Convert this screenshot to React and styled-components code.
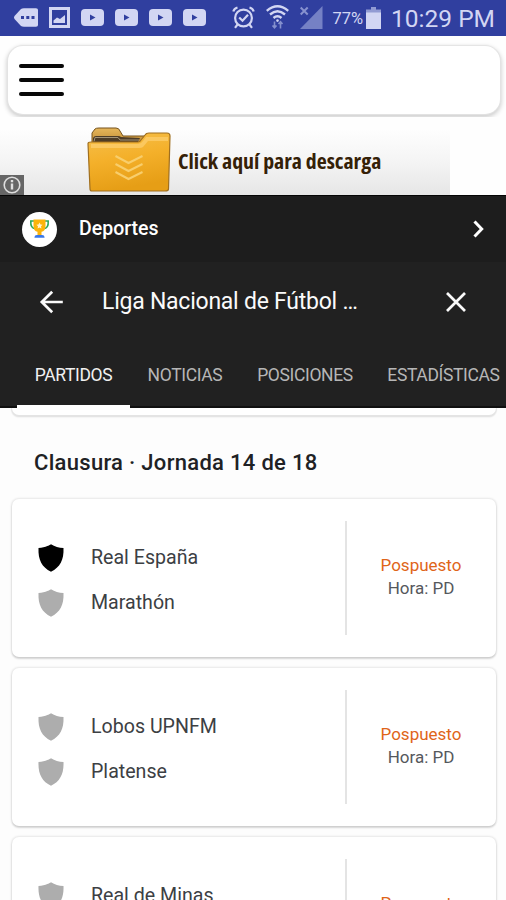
import React from "react";
import styled, { createGlobalStyle } from "styled-components";

const GlobalStyle = createGlobalStyle`
  * { box-sizing: border-box; }
  html, body { margin: 0; background: #fff; }
  body { font-family: Roboto, sans-serif; overflow: hidden; }
  svg { display: block; flex: none; overflow: visible; }
`;

const Screen = styled.div`
  width: 506px;
  height: 900px;
  overflow: hidden;
  background: #fdfdfd;
`;

const StatusBar = styled.header`
  height: 36px;
  padding: 0 11px 1px 14px;
  display: flex;
  align-items: center;
  justify-content: space-between;
  background: #303f9f;
  color: #d2d6f3;
`;

const StatusGroup = styled.div`
  display: flex;
  align-items: center;
  gap: ${(p) => p.$gap}px;
`;

const Label = styled.span`
  display: block;
  white-space: nowrap;
  font-size: ${(p) => p.$size}px;
  line-height: ${(p) => p.$line || 28}px;
  font-weight: ${(p) => p.$weight || 400};
  letter-spacing: ${(p) => p.$spacing || 0}px;
  color: ${(p) => p.$color || "inherit"};
`;

const StatusText = styled(Label)`
  padding-top: 3px;
  margin-left: ${(p) => p.$before || 0}px;
`;

const TopArea = styled.section`
  height: 81px;
  padding: 10px 6px 0 8px;
  background: #fefefe;
`;

const SearchCard = styled.div`
  height: 68px;
  border-radius: 15px;
  padding: 18px 11px;
  background: #fff;
  box-shadow: 0 0 1px 1px #e4e4e4, 0 2px 5px 1px rgba(0, 0, 0, 0.22);
`;

const Burger = styled.button`
  display: flex;
  flex-direction: column;
  justify-content: space-between;
  width: 45px;
  height: 32px;
  padding: 0;
  border: 0;
  background: none;
`;

const BurgerLine = styled.span`
  height: 4px;
  border-radius: 2px;
  background: #080808;
`;

const AdStrip = styled.section`
  height: 78px;
  display: flex;
  background: #fefefe;
`;

const AdBanner = styled.div`
  width: 450px;
  height: 78px;
  display: flex;
  align-items: flex-end;
  background: linear-gradient(#fefefe 15%, #f5f5f5 55%, #e6e6e6);
`;

const InfoBadge = styled.div`
  width: 24px;
  height: 20px;
  padding-left: 3px;
  background: #666;
  display: flex;
  align-items: center;
`;

const FolderSlot = styled.div`
  margin: 0 0 2px 63px;
`;

const AdText = styled.span`
  align-self: center;
  margin: 10px 0 0 6px;
  font: 700 21.8px/30px "Open Sans", sans-serif;
  font-stretch: 75%;
  color: #352107;
  white-space: nowrap;
`;

const SportsBar = styled.div`
  height: 67px;
  padding: 0 20px 0 22px;
  display: flex;
  align-items: center;
  background: #1d1d1d;
  border-top: 1px solid #050505;
  color: #fff;
`;

const TrophyDisc = styled.div`
  width: 35px;
  height: 35px;
  margin-right: 22px;
  border-radius: 50%;
  display: grid;
  place-items: center;
  background: #fff;
`;

const Grow = styled.div`
  flex: 1;
  min-width: 0;
`;

const LeagueHeader = styled.header`
  height: 146px;
  background: #212121;
  color: #fafafa;
`;

const TitleRow = styled.div`
  height: 79px;
  padding: 0 39px;
  display: flex;
  align-items: center;
`;

const TitleSlot = styled(Grow)`
  padding-left: 38px;
`;

const Tabs = styled.nav`
  height: 67px;
  padding-left: 17px;
  display: flex;
  box-shadow: inset 0 -2px #101010;
`;

const Tab = styled.a`
  flex: none;
  width: ${(p) => p.$width}px;
  padding-top: 20px;
  display: flex;
  justify-content: center;
  border-bottom: 3px solid ${(p) => (p.$active ? "#fff" : "transparent")};
  color: ${(p) => (p.$active ? "#f0f0f0" : "#b6b6b6")};
`;

const Feed = styled.main`
  padding: 0 10px 0 12px;
`;

const PreviousCard = styled.div`
  height: 7px;
  background: #fff;
  border-radius: 0 0 8px 8px;
  box-shadow: 0 1px 1px 1px #e4e4e4, 0 2px 2px rgba(0, 0, 0, 0.1);
  clip-path: inset(0 -4px -5px);
`;

const RoundTitle = styled.h2`
  height: 84px;
  margin: 0;
  padding: 34px 0 0 22px;
  color: #202124;
`;

const MatchCard = styled.article`
  height: 158px;
  margin-bottom: 11px;
  display: flex;
  align-items: center;
  background: #fff;
  border-radius: 7px;
  box-shadow: 0 0 2px 1px rgba(0, 0, 0, 0.09), 0 2px 2px rgba(0, 0, 0, 0.13);
`;

const Teams = styled.div`
  width: 333px;
  padding: 4px 0 0 26px;
  display: flex;
  flex-direction: column;
  gap: 17px;
`;

const TeamRow = styled.div`
  height: 28px;
  display: flex;
  align-items: center;
  gap: 26px;
  color: #3c4043;
`;

const MatchInfo = styled.div`
  flex: 1;
  height: 114px;
  padding: 0 1px 3px 0;
  border-left: 2px solid #e4e4e4;
  display: flex;
  flex-direction: column;
  align-items: center;
  justify-content: center;
`;

const YoutubeIcon = () => (
  <svg width="23" height="17" viewBox="0 0 23 17">
    <rect width="23" height="17" rx="4" fill="#d2d6f3" />
    <path d="M9 5.6 14.5 8.5 9 11.4Z" fill="#303f9f" />
  </svg>
);

const MessageIcon = () => (
  <svg width="24" height="19" viewBox="0 0 24 19">
    <path d="M7 1Q8 .2 10 .2H22Q24 .2 24 2V17Q24 18.8 22 18.8H10Q8 18.8 7 18L.5 11Q-.6 9.5.5 8Z" fill="#d2d6f3" />
    <path d="M7 8h3v3H7zm5.3 0h3v3h-3zm5.2 0h3v3h-3z" fill="#303f9f" />
  </svg>
);

const PictureIcon = () => (
  <svg width="21" height="21" viewBox="0 0 21 21">
    <path fill="#d2d6f3" fillRule="evenodd" d="M0 0H21V21H0ZM3 3V18H18V3Z" />
    <path fill="#d2d6f3" d="M4.5 16v-2.500l3.500-3 3 1.500 5-4v8Z" />
  </svg>
);

const AlarmIcon = () => (
  <svg width="23" height="24" viewBox="0 0 23 24" fill="none" stroke="#d2d6f3" strokeWidth="2.2">
    <circle cx="11.5" cy="12" r="8.4" />
    <path d="M1.300 5.500Q2 2.500 5.500 1.500M17.500 1.500Q21 2.500 21.700 5.500M7.200 11.500l3.300 3.200 5.500-6M5.500 18.500 3 21.800M17.500 18.500l2.500 3.300" />
  </svg>
);

const WifiIcon = () => (
  <svg width="23" height="24" viewBox="0 0 23 24" fill="none" stroke="#d2d6f3" strokeWidth="2.4">
    <path d="M.8 4.800Q11.500-4.200 22.200 4.800M4 8.500q7.500-6.500 15 0M7.500 12q4-3.600 8 0" />
    <circle cx="11.5" cy="14.600" r="1.300" fill="#d2d6f3" stroke="none" />
    <path d="M8.500 15.500v6.500M6.500 19.500l2 2.200 2-2.200M14.500 22.500v-6.500M12.500 18l2-2.200 2 2.200" stroke="#8490cd" strokeWidth="1.6" />
  </svg>
);

const SignalIcon = () => (
  <svg width="23" height="23" viewBox="0 0 23 23">
    <path d="M22.5 0V23H0Z" fill="#7581c5" />
    <path d="m.7 1.5 7 7m0-7-7 7" stroke="#8792cf" strokeWidth="2" />
  </svg>
);

const BatteryIcon = () => (
  <svg width="15" height="22" viewBox="0 0 15 22">
    <path d="M5 0h5v2.5h5V6H0V2.5h5Z" fill="#929bd3" />
    <path d="M0 5.5H15V22H0Z" fill="#d2d6f3" />
  </svg>
);

const InfoIcon = () => (
  <svg width="18" height="18" viewBox="0 0 18 18" fill="none" stroke="#dedede">
    <circle cx="9" cy="9" r="7.8" strokeWidth="1.6" />
    <path d="M9 4v2.200M9 7.4v6" strokeWidth="2.4" />
  </svg>
);

const FolderIcon = () => (
  <svg width="85" height="66" viewBox="0 0 85 66">
    <defs>
      <linearGradient id="folderFront" x1="0" y1="0" x2=".25" y2="1">
        <stop offset="0" stopColor="#f6c04c" />
        <stop offset=".5" stopColor="#f4b02a" />
        <stop offset="1" stopColor="#e69e16" />
      </linearGradient>
      <linearGradient id="folderBack" x1="0" y1="0" x2="0" y2="1">
        <stop offset="0" stopColor="#e6b65b" />
        <stop offset="1" stopColor="#ac761d" />
      </linearGradient>
    </defs>
    <path d="M5 14V6L8 2Q9 1 12 1H29Q32 1 33 4L36 9H77V25H5Z" fill="url(#folderBack)" stroke="#76531d" />
    <path d="M6 16V11Q7 9 9 9H31Q33 9 34 10L53 11 50 17Z" fill="#4e3c26" />
    <path d="M7 14.5 8 10.5H31L33 13H52" fill="none" stroke="#a39376" />
    <path d="M1 16.5Q1 15 4 15H51Q53 15 54 13L58 8Q59 6 62 6H80Q83 6 83 9L81.500 62Q81.500 64 78 64H5Q3 64 3 62Z" fill="url(#folderFront)" stroke="#a06f1f" strokeWidth="1.2" />
    <path d="M4 17H51Q54 17 56 14L59 10H81V14H61L56 20Q55 21 52 21H4Z" fill="#ffd782" opacity=".55" />
    <path d="m28.5 29 13 7 14-7m-27 8 13 7 14-7m-27 8 13 7 14-7" fill="none" stroke="#f8ce6c" strokeWidth="2" />
  </svg>
);

const TrophyIcon = () => (
  <svg width="21" height="20" viewBox="0 0 21 20">
    <path d="M5 2H1.8Q1.3 9.5 6.5 9.8M16 2h3.2Q19.7 9.5 14.5 9.8" fill="none" stroke="#2ba65a" strokeWidth="1.6" />
    <path d="M4.5.5H16.5V7Q16.5 12 12.5 12.8V16H8.5V12.8Q4.5 12 4.5 7Z" fill="#fbb40a" />
    <path d="m10.5 3.500 1 2 2.100.300-1.600 1.500.400 2.100-1.900-1-1.900 1 .400-2.100-1.600-1.500 2.100-.300Z" fill="#fff2cc" />
    <path d="M5.5 18.8V18Q5.5 16 8 16h5q2.5 0 2.5 2v.8Z" fill="#3977e8" />
  </svg>
);

const ChevronIcon = () => (
  <svg width="14" height="20" viewBox="0 0 14 20">
    <path d="m2.500 2.500 7.200 7.500-7.200 7.500" fill="none" stroke="#fff" strokeWidth="3" />
  </svg>
);

const BackIcon = () => (
  <svg width="25" height="24" viewBox="0 0 25 24" fill="none" stroke="#fafafa" strokeWidth="2.7">
    <path d="M23.8 12H3M13.2 1.7 2.8 12l10.4 10.3" />
  </svg>
);

const CloseIcon = () => (
  <svg width="22" height="22" viewBox="0 0 22 22">
    <path d="m2 2 18 18M20 2 2 20" stroke="#fafafa" strokeWidth="2.7" />
  </svg>
);

const Shield = ({ color }) => (
  <svg width="27" height="28" viewBox="0 0 27 28">
    <path d="M13 .3Q18.500 4 25.500 4C26 16 22 23.200 13 27.800 4 23.200 0 16 .5 4 7.500 4 13 .3 13 .3Z" fill={color} />
  </svg>
);

const tabs = [
  { name: "PARTIDOS", width: 113, active: true },
  { name: "NOTICIAS", width: 110 },
  { name: "POSICIONES", width: 130 },
  { name: "ESTADÍSTICAS", width: 147 },
];

const matches = [
  [{ name: "Real España", color: "#000" }, { name: "Marathón", color: "#adadad" }],
  [{ name: "Lobos UPNFM", color: "#adadad" }, { name: "Platense", color: "#adadad" }],
  [{ name: "Real de Minas", color: "#adadad" }, { name: "", color: "#adadad" }],
];

export default function App() {
  return (
    <Screen>
      <GlobalStyle />
      <StatusBar>
        <StatusGroup $gap={11}>
          <MessageIcon />
          <PictureIcon />
          <YoutubeIcon />
          <YoutubeIcon />
          <YoutubeIcon />
          <YoutubeIcon />
        </StatusGroup>
        <StatusGroup $gap={9}>
          <StatusGroup $gap={11}>
            <AlarmIcon />
            <WifiIcon />
            <SignalIcon />
          </StatusGroup>
          <StatusGroup $gap={3}>
            <StatusText $size={16.5}>77%</StatusText>
            <BatteryIcon />
            <StatusText $size={24.5} $before={7}>10:29 PM</StatusText>
          </StatusGroup>
        </StatusGroup>
      </StatusBar>

      <TopArea>
        <SearchCard>
          <Burger aria-label="Menú">
            <BurgerLine />
            <BurgerLine />
            <BurgerLine />
          </Burger>
        </SearchCard>
      </TopArea>

      <AdStrip>
        <AdBanner>
          <InfoBadge><InfoIcon /></InfoBadge>
          <FolderSlot><FolderIcon /></FolderSlot>
          <AdText>Click aquí para descarga</AdText>
        </AdBanner>
      </AdStrip>

      <SportsBar>
        <TrophyDisc><TrophyIcon /></TrophyDisc>
        <Grow><Label $size={19.5} $weight={500}>Deportes</Label></Grow>
        <ChevronIcon />
      </SportsBar>

      <LeagueHeader>
        <TitleRow>
          <BackIcon />
          <TitleSlot><Label $size={23} $spacing={-0.24}>Liga Nacional de Fútbol …</Label></TitleSlot>
          <CloseIcon />
        </TitleRow>
        <Tabs>
          {tabs.map((tab) => (
            <Tab key={tab.name} $width={tab.width} $active={tab.active}>
              <Label $size={17.5} $spacing={-0.35}>{tab.name}</Label>
            </Tab>
          ))}
        </Tabs>
      </LeagueHeader>

      <Feed>
        <PreviousCard />
        <RoundTitle><Label $size={22} $weight={500} $spacing={0.3}>Clausura · Jornada 14 de 18</Label></RoundTitle>
        {matches.map((teams) => (
          <MatchCard key={teams[0].name}>
            <Teams>
              {teams.map((team) => (
                <TeamRow key={team.name}>
                  <Shield color={team.color} />
                  <Label $size={19.6}>{team.name}</Label>
                </TeamRow>
              ))}
            </Teams>
            <MatchInfo>
              <Label $size={17} $line={23} $color="#df6519">Pospuesto</Label>
              <Label $size={17} $line={23} $color="#55585c">Hora: PD</Label>
            </MatchInfo>
          </MatchCard>
        ))}
      </Feed>
    </Screen>
  );
}
